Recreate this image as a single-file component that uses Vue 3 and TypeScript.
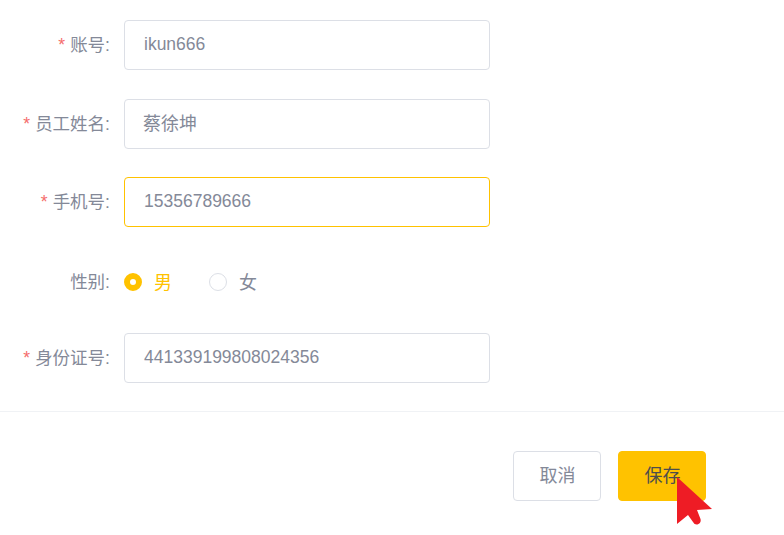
<script setup lang="ts">
import { ref } from 'vue'

interface Field {
  label: string
  value: string
  required: boolean
  focused?: boolean
  cjk?: boolean
}

const topFields: Field[] = [
  { label: '账号', value: 'ikun666', required: true },
  { label: '员工姓名', value: '蔡徐坤', required: true, cjk: true },
  { label: '手机号', value: '15356789666', required: true, focused: true }
]

const idField: Field = { label: '身份证号', value: '441339199808024356', required: true }

const gender = ref('男')
const genders = ['男', '女']
</script>

<template>
  <div class="page">
    <form class="form" @submit.prevent>
      <div v-for="f in topFields" :key="f.label" class="row">
        <label class="label"><span v-if="f.required" class="star">*</span>{{ f.label }}:</label>
        <div class="input" :class="{ focused: f.focused, cjk: f.cjk }">{{ f.value }}</div>
      </div>

      <div class="row">
        <label class="label plain">性别:</label>
        <div class="radios">
          <div
            v-for="g in genders"
            :key="g"
            class="radio"
            :class="{ checked: gender === g }"
            @click="gender = g"
          >
            <span class="dot"></span>
            <span class="radio-text">{{ g }}</span>
          </div>
        </div>
      </div>

      <div class="row">
        <label class="label"><span class="star">*</span>{{ idField.label }}:</label>
        <div class="input">{{ idField.value }}</div>
      </div>
    </form>

    <div class="footer">
      <button class="btn" type="button">取消</button>
      <div class="save-wrap">
        <button class="btn primary" type="button">保存</button>
        <!-- 鼠标指针 -->
        <svg class="cursor" width="37" height="49" viewBox="0 0 37 49">
          <path
            d="M1 0 L36 32 L21 33 L24.500 42 Q25.500 46 21.500 47.500 Q18.500 48 17 45 L12 38 L1 47 Z"
            fill="#ee1c25"
          />
        </svg>
      </div>
    </div>
  </div>
</template>

<style>
html,
body {
  margin: 0;
  background: #fff;
}
</style>

<style scoped>
.page {
  width: 784px;
  height: 535px;
  overflow: hidden;
  background: #fff;
  font-family: 'Liberation Sans', 'Noto Sans CJK SC', sans-serif;
  font-size: 17.5px;
  color: #848998;
}

.form {
  display: flex;
  flex-direction: column;
  gap: 28px;
  padding: 20px 0 28px;
}

.row {
  display: flex;
  align-items: center;
  height: 50px;
}

.row:first-child {
  margin-bottom: 1px;
}

.label {
  width: 110px;
  margin-right: 14px;
  padding-bottom: 4px;
  text-align: right;
}

.label.plain {
  padding-bottom: 0;
}

.star {
  margin-right: 5px;
  color: #f56c6c;
}

.input {
  box-sizing: border-box;
  display: flex;
  align-items: center;
  width: 366px;
  height: 50px;
  padding: 0 19px 2px;
  border: 1px solid #dcdfe6;
  border-radius: 4px;
}

.input.cjk {
  padding: 0 18px 4px;
  font-size: 18px;
}

.input.focused {
  border-color: #ffc200;
}

.radios {
  display: flex;
  gap: 37px;
  padding-top: 4px;
}

.radio {
  display: flex;
  align-items: center;
  gap: 12px;
  cursor: pointer;
}

.radio-text {
  padding-bottom: 2px;
  font-size: 18px;
}

.radio.checked {
  color: #ffc200;
}

.dot {
  box-sizing: border-box;
  width: 18px;
  height: 18px;
  border: 1px solid #dcdfe6;
  border-radius: 50%;
  background: #fff;
}

.radio.checked .dot {
  border: 6px solid #ffc200;
}

.footer {
  display: flex;
  justify-content: flex-end;
  gap: 17px;
  padding: 39px 78px 0 0;
  border-top: 1px solid #f0f2f5;
}

.btn {
  box-sizing: border-box;
  width: 88px;
  height: 50px;
  padding: 0 0 4px 1px;
  border: 1px solid #dcdfe6;
  border-radius: 4px;
  background: #fff;
  color: #848998;
  font: inherit;
  font-size: 18px;
  cursor: pointer;
}

.btn.primary {
  border-color: #ffc200;
  background: #ffc200;
  color: #4d4d4d;
}

.save-wrap {
  position: relative;
  display: flex;
}

.cursor {
  position: absolute;
  left: 58px;
  top: 26px;
}
</style>
